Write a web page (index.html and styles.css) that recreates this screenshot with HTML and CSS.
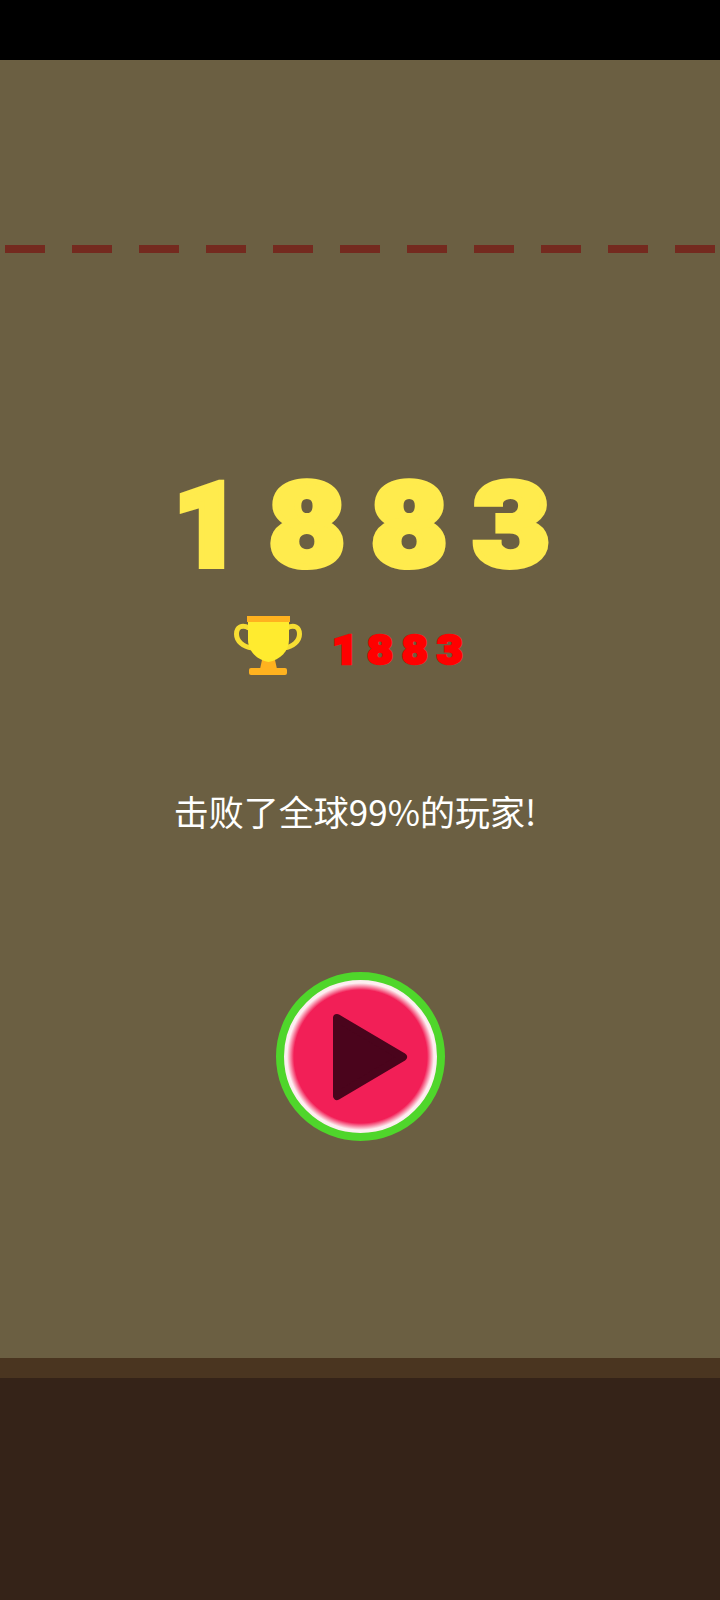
FILE: index.html
```html
<!DOCTYPE html>
<html lang="zh-CN">
<head>
  <meta charset="UTF-8">
  <meta name="viewport" content="width=device-width, initial-scale=1.0">
  <title>合成大西瓜</title>
  <link rel="stylesheet" href="styles.css">
</head>
<body>
  <div class="topbar"></div>

  <div class="game">
    <div class="deadline"></div>

    <div class="score"><span class="score-one">1</span>883</div>

    <div class="best">
      <svg class="trophy" width="68" height="60" viewBox="0 0 68 60">
        <path d="M15 12C8 8 2.500 11 2.500 18C2.500 25 9 31 18 32M53 12C60 8 65.500 11 65.500 18C65.500 25 59 31 50 32" fill="none" stroke="#f7de33" stroke-width="5"/>
        <path d="M28 44H41L43 53H26Z" fill="#ffb21f"/>
        <path d="M14 5H55V24C55 35 46 44 34.500 46C23 44 14 35 14 24Z" fill="#ffeb2f"/>
        <rect x="13" y="0" width="43" height="6" fill="#ffb21f"/>
        <rect x="15" y="52" width="38" height="7" rx="2" fill="#ffb21f"/>
      </svg>
      <span class="best-num">1883</span>
    </div>

    <p class="rank">击败了全球99%的玩家<span class="bang">!</span></p>

    <button class="replay">
      <svg width="78" height="90" viewBox="0 0 78 90">
        <path d="M6 6L72 45L6 84Z" fill="#4a041c" stroke="#4a041c" stroke-width="8" stroke-linejoin="round"/>
      </svg>
    </button>
  </div>

  <div class="ground-top"></div>
  <div class="ground"></div>
</body>
</html>
```

FILE: styles.css
```css
body {
  margin: 0;
  height: 1600px;
  display: flex;
  flex-direction: column;
  background: #352318;
  overflow: hidden;
}
.topbar {
  height: 60px;
  background: #000;
}
.game {
  height: 1298px;
  background: #6b5f42;
  display: flex;
  flex-direction: column;
  align-items: center;
}
.deadline {
  width: 100%;
  height: 8px;
  margin-top: 185px;
  background: repeating-linear-gradient(90deg, #742a1f 0 40px, transparent 40px 67px) 5px 0 no-repeat;
}
.score {
  margin-top: 198px;
  margin-right: -22px;
  font-family: "Roboto", sans-serif;
  font-weight: 900;
  font-size: 117px;
  line-height: 150px;
  letter-spacing: 22px;
  color: #ffeb4d;
  -webkit-text-stroke: 6px #ffeb4d;
  transform: scaleX(1.14);
}
.score-one {
  display: inline-block;
  transform: scaleX(0.88);
  transform-origin: 60% center;
}
.best {
  display: flex;
  align-items: flex-end;
  margin-top: 15px;
  margin-right: 30px;
}
.trophy {
  display: block;
}
.best-num {
  margin-left: 30px;
  font-family: "Roboto", sans-serif;
  font-weight: 900;
  font-size: 40px;
  line-height: 50px;
  letter-spacing: 8px;
  color: #ff0000;
  -webkit-text-stroke: 2.500px #ff0000;
  transform: scaleX(1.12);
  transform-origin: left center;
}
.rank {
  margin: 112px 0 0;
  font-family: "Noto Sans CJK SC", "Noto Sans", sans-serif;
  font-size: 35px;
  line-height: 46px;
  color: #fff;
}
.bang {
  margin-right: 10px;
}
.replay {
  display: flex;
  align-items: center;
  justify-content: center;
  box-sizing: border-box;
  width: 169px;
  height: 169px;
  margin-top: 138px;
  padding: 0 0 0 20px;
  border: 8px solid #4fd62b;
  border-radius: 50%;
  background: radial-gradient(circle closest-side, #f21f57 87%, #fdeef0 96%);
}
.ground-top {
  height: 20px;
  background: #4a3520;
}
.ground {
  flex: 1;
  background: #352318;
}
```
